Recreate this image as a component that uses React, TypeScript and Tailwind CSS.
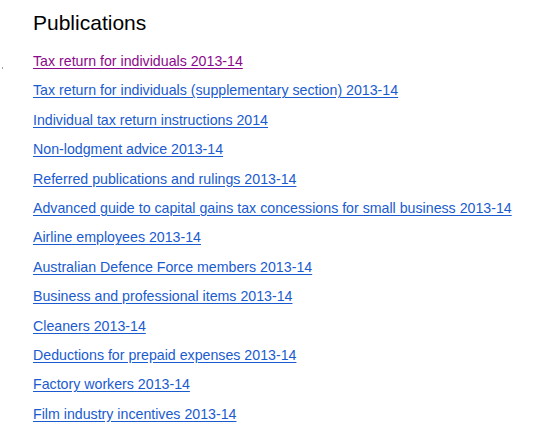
const links = [
  { label: "Tax return for individuals 2013-14", visited: true },
  { label: "Tax return for individuals (supplementary section) 2013-14" },
  { label: "Individual tax return instructions 2014" },
  { label: "Non-lodgment advice 2013-14" },
  { label: "Referred publications and rulings 2013-14" },
  { label: "Advanced guide to capital gains tax concessions for small business 2013-14" },
  { label: "Airline employees 2013-14" },
  { label: "Australian Defence Force members 2013-14" },
  { label: "Business and professional items 2013-14" },
  { label: "Cleaners 2013-14" },
  { label: "Deductions for prepaid expenses 2013-14" },
  { label: "Factory workers 2013-14" },
  { label: "Film industry incentives 2013-14" },
];

export default function App() {
  return (
    <div
      className="relative h-[437px] w-[544px] overflow-hidden bg-white pl-[33px] pt-[11px]"
      style={{ fontFamily: '"Liberation Sans", Arial, sans-serif' }}
    >
      {/* stray mark on the left edge */}
      <span className="absolute left-[2px] top-[67px] h-[2px] w-[1px] bg-gray-400" />
      <h2 className="text-[21px] font-normal leading-[23px] text-black">
        Publications
      </h2>
      <ul className="mt-[13px]">
        {links.map((l) => (
          <li key={l.label} className="h-[29.4px] text-[14.2px] leading-[29.4px]">
            <a
              href="#"
              className={
                l.visited
                  ? "text-[#8b0a8b] underline underline-offset-[2px]"
                  : "text-[#1a5bd0] underline underline-offset-[2px]"
              }
            >
              {l.label}
            </a>
          </li>
        ))}
      </ul>
    </div>
  );
}
